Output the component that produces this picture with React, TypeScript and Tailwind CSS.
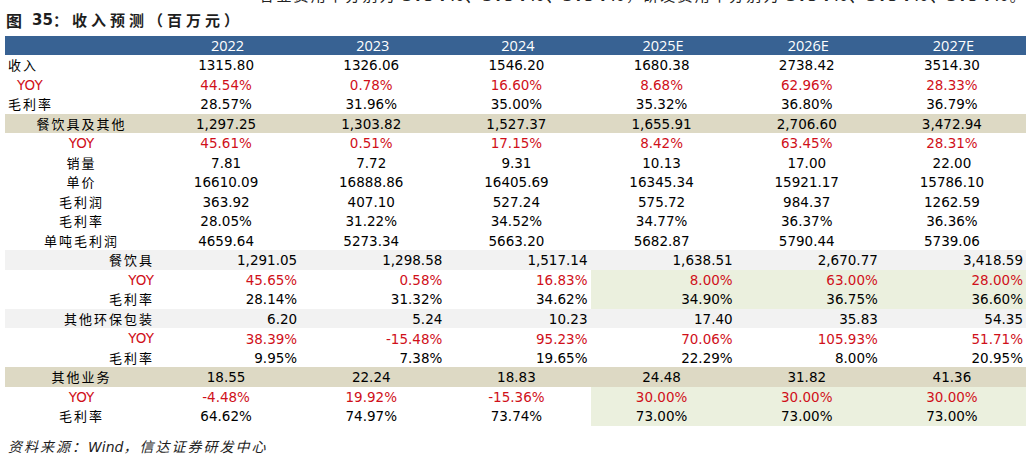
type Row = {
  label: string;
  kind: "top" | "topRed" | "center" | "centerRed" | "right" | "rightRed";
  bg?: "beige" | "gray";
  green?: boolean;
  align: "center" | "right";
  values: string[];
};

const rows: Row[] = [
  { label: "收入", kind: "top", align: "center", values: ["1315.80", "1326.06", "1546.20", "1680.38", "2738.42", "3514.30"] },
  { label: "YOY", kind: "topRed", align: "center", values: ["44.54%", "0.78%", "16.60%", "8.68%", "62.96%", "28.33%"] },
  { label: "毛利率", kind: "top", align: "center", values: ["28.57%", "31.96%", "35.00%", "35.32%", "36.80%", "36.79%"] },
  { label: "餐饮具及其他", kind: "center", bg: "beige", align: "center", values: ["1,297.25", "1,303.82", "1,527.37", "1,655.91", "2,706.60", "3,472.94"] },
  { label: "YOY", kind: "centerRed", align: "center", values: ["45.61%", "0.51%", "17.15%", "8.42%", "63.45%", "28.31%"] },
  { label: "销量", kind: "center", align: "center", values: ["7.81", "7.72", "9.31", "10.13", "17.00", "22.00"] },
  { label: "单价", kind: "center", align: "center", values: ["16610.09", "16888.86", "16405.69", "16345.34", "15921.17", "15786.10"] },
  { label: "毛利润", kind: "center", align: "center", values: ["363.92", "407.10", "527.24", "575.72", "984.37", "1262.59"] },
  { label: "毛利率", kind: "center", align: "center", values: ["28.05%", "31.22%", "34.52%", "34.77%", "36.37%", "36.36%"] },
  { label: "单吨毛利润", kind: "center", align: "center", values: ["4659.64", "5273.34", "5663.20", "5682.87", "5790.44", "5739.06"] },
  { label: "餐饮具", kind: "right", bg: "gray", align: "right", values: ["1,291.05", "1,298.58", "1,517.14", "1,638.51", "2,670.77", "3,418.59"] },
  { label: "YOY", kind: "rightRed", green: true, align: "right", values: ["45.65%", "0.58%", "16.83%", "8.00%", "63.00%", "28.00%"] },
  { label: "毛利率", kind: "right", green: true, align: "right", values: ["28.14%", "31.32%", "34.62%", "34.90%", "36.75%", "36.60%"] },
  { label: "其他环保包装", kind: "right", bg: "gray", align: "right", values: ["6.20", "5.24", "10.23", "17.40", "35.83", "54.35"] },
  { label: "YOY", kind: "rightRed", align: "right", values: ["38.39%", "-15.48%", "95.23%", "70.06%", "105.93%", "51.71%"] },
  { label: "毛利率", kind: "right", align: "right", values: ["9.95%", "7.38%", "19.65%", "22.29%", "8.00%", "20.95%"] },
  { label: "其他业务", kind: "center", bg: "beige", align: "center", values: ["18.55", "22.24", "18.83", "24.48", "31.82", "41.36"] },
  { label: "YOY", kind: "centerRed", green: true, align: "center", values: ["-4.48%", "19.92%", "-15.36%", "30.00%", "30.00%", "30.00%"] },
  { label: "毛利率", kind: "center", green: true, align: "center", values: ["64.62%", "74.97%", "73.74%", "73.00%", "73.00%", "73.00%"] },
];

const years = ["2022", "2023", "2024", "2025E", "2026E", "2027E"];

const cjk = "font-['Noto_Sans_CJK_SC',sans-serif] text-[13px] tracking-[2px]";
const num = "font-['DejaVu_Sans',sans-serif] text-[13.5px]";

function Label({ row }: { row: Row }) {
  const red = row.kind.endsWith("Red");
  const text = red ? (
    <span className={`${num} text-[#d0101a]`}>YOY</span>
  ) : (
    <span className={cjk}>{row.label}</span>
  );
  if (row.kind === "top") return <div className="flex items-center pl-[3px]">{text}</div>;
  if (row.kind === "topRed") return <div className="flex items-center pl-[12px]">{text}</div>;
  if (row.kind === "right" || row.kind === "rightRed")
    return <div className="flex items-center justify-end pr-[1px]">{text}</div>;
  return <div className="flex items-center justify-center pl-[3px]">{text}</div>;
}

export default function App() {
  return (
    <div className="w-[1031px] h-[459px] bg-white text-black overflow-hidden">
      {/* cut-off line from the paragraph above */}
      <div className="h-[6px] overflow-hidden">
        <div className="-mt-[15px] pr-[4px] text-right whitespace-nowrap font-['Noto_Sans_CJK_SC',sans-serif] text-[15px] leading-[20px] text-[#222] tracking-[2.2px]">
          各业费用率分别为 <b className="font-['DejaVu_Sans',sans-serif]">3.84%、3.84%、3.84%</b>，研发费用率分别为{" "}
          <b className="font-['DejaVu_Sans',sans-serif]">3.84%、3.84%、3.84%</b>。
        </div>
      </div>

      <div className="h-[30px] flex items-center pl-[6px] pb-[2px] font-bold text-[#1e1e1e]">
        <span className="font-['Noto_Sans_CJK_SC',sans-serif] text-[16px]">图</span>
        <span className="ml-[10px] font-['DejaVu_Sans',sans-serif] text-[15px]">35</span>
        <span className="font-['Noto_Sans_CJK_SC',sans-serif] text-[15px] tracking-[4px]">：收入预测（百万元）</span>
      </div>

      <div className="ml-[5px] w-[1021px]">
        <div className="grid grid-cols-[150px_repeat(6,1fr)] h-[19px] bg-[#386293] text-white font-['Open_Sans',sans-serif] text-[14.5px]">
          <div />
          {years.map((y) => (
            <div key={y} className="flex items-center justify-center leading-none pt-[1px]">
              {y}
            </div>
          ))}
        </div>

        {rows.map((row, i) => {
          const red = row.kind.endsWith("Red");
          const rowBg = row.bg === "beige" ? "bg-[#ddd9c4]" : row.bg === "gray" ? "bg-[#f2f2f2]" : "";
          return (
            <div key={i} className={`grid grid-cols-[150px_repeat(6,1fr)] h-[19.53px] ${rowBg}`}>
              <Label row={row} />
              {row.values.map((v, j) => (
                <div
                  key={j}
                  className={`flex items-center ${num} leading-none pt-[2px] ${
                    row.align === "right" ? "justify-end pr-[3px]" : "justify-center pr-[3px]"
                  } ${red ? "text-[#d0101a]" : ""} ${row.green && j >= 3 ? "bg-[#ebf0de]" : ""}`}
                >
                  {v}
                </div>
              ))}
            </div>
          );
        })}
      </div>

      <div className="mt-[10px] pl-[8px] italic font-['Noto_Sans_CJK_SC',sans-serif] text-[14px] tracking-[2px] text-[#1e1e1e]">
        资料来源：<span className="font-['DejaVu_Sans',sans-serif] tracking-normal">Wind</span>，信达证券研发中心
      </div>
    </div>
  );
}
